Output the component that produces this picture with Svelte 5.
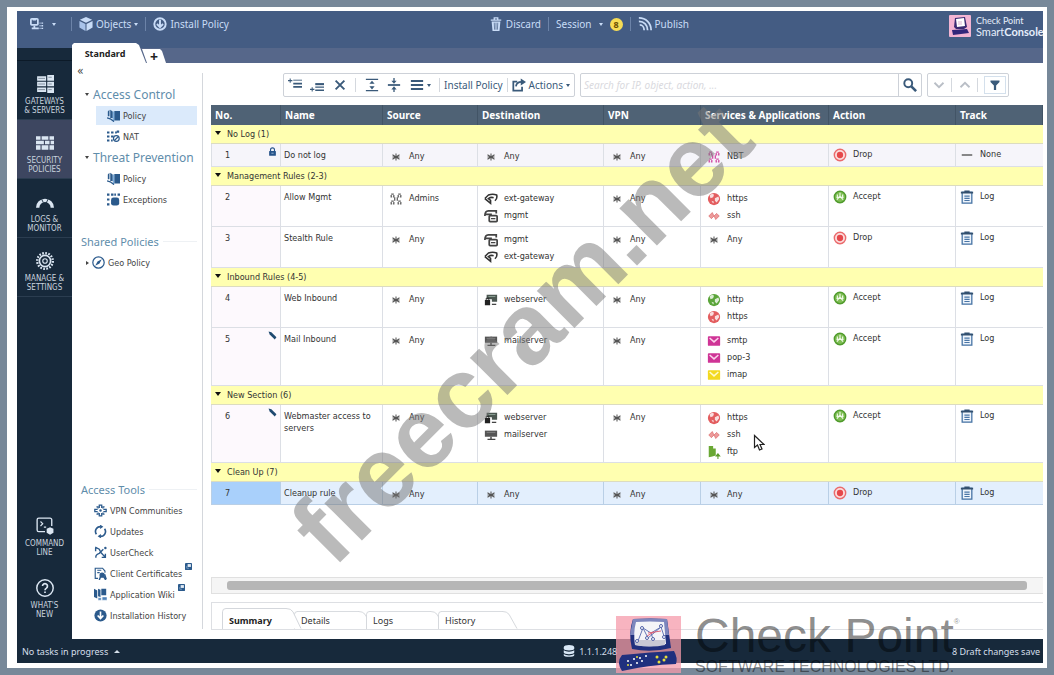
<script lang="ts">
	interface Item {
		icon: string;
		label: string;
	}

	interface Rule {
		no: number;
		name: string;
		source: Item[];
		destination: Item[];
		services: Item[];
		action: "Accept" | "Drop";
		track: "Log" | "None";
		mark?: "lock" | "pencil";
	}

	interface Section {
		title: string;
		rules: Rule[];
	}

	const any: Item = { icon: "any", label: "Any" };
	const gateway: Item = { icon: "gateway", label: "ext-gateway" };
	const mgmt: Item = { icon: "mgmt", label: "mgmt" };
	const webserver: Item = { icon: "webserver", label: "webserver" };
	const mailserver: Item = { icon: "mailserver", label: "mailserver" };
	const https: Item = { icon: "globe-red", label: "https" };
	const ssh: Item = { icon: "ssh", label: "ssh" };

	const sections: Section[] = [
		{
			title: "No Log (1)",
			rules: [
				{ no: 1, name: "Do not log", source: [any], destination: [any], services: [{ icon: "group-pink", label: "NBT" }], action: "Drop", track: "None", mark: "lock" },
			],
		},
		{
			title: "Management Rules (2-3)",
			rules: [
				{ no: 2, name: "Allow Mgmt", source: [{ icon: "group", label: "Admins" }], destination: [gateway, mgmt], services: [https, ssh], action: "Accept", track: "Log" },
				{ no: 3, name: "Stealth Rule", source: [any], destination: [mgmt, gateway], services: [any], action: "Drop", track: "Log" },
			],
		},
		{
			title: "Inbound Rules (4-5)",
			rules: [
				{ no: 4, name: "Web Inbound", source: [any], destination: [webserver], services: [{ icon: "globe-green", label: "http" }, https], action: "Accept", track: "Log" },
				{
					no: 5,
					name: "Mail Inbound",
					source: [any],
					destination: [mailserver],
					services: [{ icon: "mail-pink", label: "smtp" }, { icon: "mail-pink", label: "pop-3" }, { icon: "mail-yellow", label: "imap" }],
					action: "Accept",
					track: "Log",
					mark: "pencil",
				},
			],
		},
		{
			title: "New Section (6)",
			rules: [
				{ no: 6, name: "Webmaster access to servers", source: [any], destination: [webserver, mailserver], services: [https, ssh, { icon: "ftp", label: "ftp" }], action: "Accept", track: "Log", mark: "pencil" },
			],
		},
		{
			title: "Clean Up (7)",
			rules: [
				{ no: 7, name: "Cleanup rule", source: [any], destination: [any], services: [any], action: "Drop", track: "Log" },
			],
		},
	];

	const columns = ["No.", "Name", "Source", "Destination", "VPN", "Services & Applications", "Action", "Track"];

	const railTop = [
		{ icon: "servers", lines: ["GATEWAYS", "& SERVERS"] },
		{ icon: "wall", lines: ["SECURITY", "POLICIES"] },
		{ icon: "gauge", lines: ["LOGS &", "MONITOR"] },
		{ icon: "gear", lines: ["MANAGE &", "SETTINGS"] },
	];
	const railBottom = [
		{ icon: "terminal", lines: ["COMMAND", "LINE"] },
		{ icon: "help", lines: ["WHAT'S", "NEW"] },
	];

	const tools = [
		{ icon: "vpn", label: "VPN Communities" },
		{ icon: "updates", label: "Updates" },
		{ icon: "usercheck", label: "UserCheck" },
		{ icon: "cert", label: "Client Certificates", external: true },
		{ icon: "wiki", label: "Application Wiki", external: true },
		{ icon: "install", label: "Installation History" },
	];

	const detailTabs = ["Summary", "Details", "Logs", "History"];

	let activeView = $state("wall");
	let activeDetail = $state("Summary");
	let selectedRule = $state(7);
	let query = $state("");

	function rowLines(rule: Rule) {
		return Math.max(rule.source.length, rule.destination.length, rule.services.length);
	}
</script>

{#snippet icon(name: string)}
	<svg class="icon" viewBox="0 0 16 16" aria-hidden="true" fill="none" stroke="currentColor" stroke-width="1.5">
		{#if name === "menu"}
			<rect x="1" y="2" width="8" height="7" rx="1" stroke-width="2" />
			<path d="M3 3h4M2 13h8M5 10v3" stroke-width="2" />
			<path d="M11 7h1M13 7h2M11 10h1M13 10h2M11 13h1M13 13h2" />
		{:else if name === "cube"}
			<path d="M8 0l7 3-7 3.500L1 3z" fill="currentColor" stroke="none" />
			<path d="M0.500 4.500L7.400 8v8L0.500 12z" fill="#a9c3ea" stroke="none" />
			<path d="M15.500 4.500L8.600 8v8l6.900-4z" fill="currentColor" stroke="none" />
		{:else if name === "install"}
			<circle cx="8" cy="8" r="6.500" stroke-width="2.200" />
			<path d="M8 3v8M4.500 8L8 11.500 11.500 8" stroke-width="2.200" />
		{:else if name === "history"}
			<circle cx="8" cy="8" r="7.500" fill="currentColor" stroke="none" />
			<path d="M8 3v9M4.500 8L8 11.800 11.500 8" stroke="#fff" stroke-width="2" />
		{:else if name === "trash"}
			<path d="M2 3.500h12M6 3V1h4v2" />
			<path d="M3 5h10l-1 11H4z" fill="currentColor" stroke="none" />
			<path d="M6 6.500l.4 8M8 6.500v8M10 6.500l-.4 8" stroke="#445c83" stroke-width=".8" />
		{:else if name === "publish"}
			<path d="M1 1c8 0 14 6 14 14M1 5c6 0 10 4 10 10M2 9c3 0 5 3 5 6" stroke-width="2" />
		{:else if name === "servers"}
			<g fill="currentColor" stroke="none">
				<path d="M1 1h8v4H1zM1 6h8v4H1zM1 11h8v4H1zM10 0h6v5h-6zM10 6h6v4h-6zM10 11h6v5h-6z" />
			</g>
			<path d="M2 3h6M2 8h6M2 13h6M11 2h3M11 8h3M11 13h3" stroke="#7b8998" stroke-width=".8" />
		{:else if name === "wall"}
			<path d="M0 2h4v3H0zM5 2h6v3H5zM12 2h4v3h-4zM0 6h7v3H0zM8 6h4v3H8zM13 6h3v3h-3zM0 10h4v4H0zM5 10h6v4H5zM12 10h4v4h-4z" fill="currentColor" stroke="none" />
		{:else if name === "gauge"}
			<path d="M1.500 13A6.500 6.500 0 0 1 14.500 13" stroke-width="3" />
			<path d="M5 5.500l1.500 3M11 5l-2 4" stroke="#17293b" stroke-width=".8" />
		{:else if name === "gear"}
			<circle cx="8" cy="8" r="7" stroke-width="2" stroke-dasharray="1.500 1.250" />
			<circle cx="8" cy="8" r="5" />
			<circle cx="8" cy="8" r="2" stroke-width="1" />
		{:else if name === "terminal"}
			<path d="M8 13H2.500A1.500 1.500 0 0 1 1 11.500v-9A1.500 1.500 0 0 1 2.500 1h10A1.500 1.500 0 0 1 14 2.500V8" stroke-width="1.200" />
			<path d="M4 4l2 2-2 2M7 9h2" stroke-width="1" />
			<path d="M9.500 10.500l3-1.500 3 1.500v3.500l-3 1.700-3-1.700z" fill="currentColor" stroke="none" />
		{:else if name === "help"}
			<circle cx="8" cy="8" r="7.300" stroke-width="1.300" />
			<path d="M5.800 6.300a2.200 2.200 0 1 1 3.500 1.800Q8 8.900 8 10M8 11.200v1.300" />
		{:else if name === "policy"}
			<path d="M1 3l2-2v8H1zM4 1l3 2v8H4zM9 2.500h7V14H9z" fill="currentColor" stroke="none" />
			<path d="M0 11l4 1 4 3V4" stroke-width="1.600" />
			<path d="M8 3v11" stroke="#7fb0e0" stroke-width="1.500" />
		{:else if name === "nat"}
			<path d="M0 3h3M5 3h3M10 3h2M0 8h3M5 8h3M0 13h3M5 13h2M12 2h3" stroke-width="2.500" />
			<circle cx="11.500" cy="10.500" r="3.500" />
			<path d="M9 13l5-5" />
		{:else if name === "exceptions"}
			<path d="M0 2h3M5 2h3M9 2h2M13 2h3M0 8h3M0 14h3" stroke-width="2.500" />
			<rect x="5" y="5.500" width="10" height="10" rx="3" fill="currentColor" stroke="none" />
		{:else if name === "compass"}
			<circle cx="8" cy="8" r="7" />
			<path d="M12 4L9.200 9.200 4 12l2.800-5.200z" fill="currentColor" stroke="none" />
		{:else if name === "vpn"}
			<path d="M6.500 5V1.500h3V5M6.500 11v3.500h3V11M4.500 6.500H1v3h3.500M11.500 6.500H15v3h-3.500" stroke-width="1.600" />
			<path d="M3 3.500h2v2M13 3.500h-2v2M3 12.500h2v-2M13 12.500h-2v-2" stroke-width="1.600" />
			<circle cx="8" cy="8" r="1.500" fill="currentColor" stroke="none" />
		{:else if name === "updates"}
			<path d="M3 11.500A6 6 0 0 1 8 2M13 4.500A6 6 0 0 1 8 14" stroke-width="2" />
			<path d="M7.500-.5l4 2.700-4 2.800zM8.500 16.500l-4-2.700 4-2.800z" fill="currentColor" stroke="none" />
		{:else if name === "usercheck"}
			<path d="M1.500 1.500l5 2.500 2 4 5.500 6M2.500 14.500c-1-3 1-4.500 4-5.500l5-5M9.500 14h4.500V9.500M2 2v4.500" stroke-width="1.700" />
			<circle cx="14" cy="2.500" r="1.500" fill="currentColor" stroke="none" />
		{:else if name === "cert"}
			<path d="M5 14H1.500V1.500h9L13.500 5v2M4 4h5M4 7h3" stroke-width="1.400" />
			<circle cx="10" cy="10" r="2.500" fill="currentColor" />
			<path d="M8 12l-1.500 4M12 12l2.500 4M13 9l2 6" stroke-width="1.800" />
		{:else if name === "wiki"}
			<path d="M0 1l4 2v10l-4-2zM5 1l3 1v9l-3-1zM9 1h6v8H9z" fill="currentColor" stroke="none" />
			<path d="M5 12h4v3H5zM10 11h6v4h-6z" fill="#4f82b8" stroke="#fff" stroke-width=".6" />
		{:else if name === "external"}
			<rect x="0" y="0" width="16" height="16" rx="2" fill="currentColor" stroke="none" />
			<path d="M6 2.500h7.500V9H6z" fill="#dfe9f4" stroke="none" />
			<path d="M4 7v5h5" stroke="#7fa3c8" stroke-width="1.800" />
		{:else if name === "rule-above"}
			<path d="M0 3h5M2.500.5v5" stroke-width="1.200" />
			<path d="M6 2.500h10" stroke-width="1" />
			<path d="M6 6.500h10M6 10h10" stroke-width="2" />
		{:else if name === "rule-below"}
			<path d="M0 13h5M2.500 10.500v5" stroke-width="1.200" />
			<path d="M6 7h10" stroke-width="2.400" />
			<path d="M6 10.500h10M6 14h10" stroke-width="1.500" />
		{:else if name === "cross"}
			<path d="M3 3l10 10M13 3L3 13" stroke-width="2.200" />
		{:else if name === "expand"}
			<path d="M1 1.500h14M1 14.500h14M8 5v1M8 10v1" />
			<path d="M5 6.500l3-3.500 3 3.500zM5 9.500l3 3.500 3-3.500z" fill="currentColor" stroke="none" />
		{:else if name === "collapse"}
			<path d="M1 8h14" stroke-width="2" />
			<path d="M8 0v4M8 16v-4" />
			<path d="M5 3l3 3.500L11 3zM5 13l3-3.500 3 3.500z" fill="currentColor" stroke="none" />
		{:else if name === "list"}
			<path d="M1 3.500h14M1 8h14M1 12.500h14" stroke-width="2.400" />
		{:else if name === "share"}
			<path d="M6 4H1.500v10.500h10V10" stroke-width="2" />
			<path d="M4.500 9.500C5 6 7.500 4.500 11 4.500" stroke-width="2" />
			<path d="M10 .5L16 4.500 10 8.500z" fill="currentColor" stroke="none" />
		{:else if name === "search"}
			<circle cx="6" cy="6" r="4.500" stroke-width="2.200" />
			<path d="M9.500 9.500l5.500 5.500" stroke-width="3" />
		{:else if name === "down"}
			<path d="M2 5l6 6 6-6" stroke-width="2.400" />
		{:else if name === "up"}
			<path d="M2 11l6-6 6 6" stroke-width="2.400" />
		{:else if name === "filter"}
			<path d="M2 2h12v2L9.500 8.500v6h-3v-6L2 4z" fill="currentColor" stroke="none" />
		{:else if name === "any"}
			<path d="M8 4v8M4 5.500l8 5M12 5.500l-8 5M4 8h8" stroke="#555" stroke-width="1.200" />
		{:else if name === "group" || name === "group-pink"}
			<g stroke={name === "group" ? "#666" : "#d24fa6"} stroke-width="1.500">
				<path d="M2.500 2.500h3v3h-3zM10.500 2.500h3v3h-3zM2.500 10.500h3v3h-3zM10.500 10.500h3v3h-3z" stroke-dasharray="3 1" />
				<path d="M6.500 6v4M9.500 6v4" />
			</g>
		{:else if name === "gateway"}
			<path d="M1 7.500l4-4q5-2 9.500 0 1 4-2 6.500M1 7.500L7.500 13V9.500L5 7.500q3-2 6-1" stroke="#333" stroke-width="1.800" />
		{:else if name === "mgmt"}
			<path d="M1 8c0-4 1-6 4-6h9v3M2 6h7" stroke="#444" stroke-width="2" />
			<rect x="6" y="7.500" width="9" height="7" rx="1" stroke="#444" stroke-width="2" />
			<path d="M8 11h5" stroke="#444" />
		{:else if name === "webserver"}
			<path d="M3 2h12v8H9V7H3z" fill="#4a5650" stroke="none" />
			<path d="M5 4h8" stroke="#8fa398" stroke-width="1" />
			<rect x="1" y="8" width="6" height="6" fill="#222" stroke="none" />
			<path d="M9 13h5" stroke="#444" />
			<path d="M2.500 8V6h3v2" stroke="#222" stroke-width="1" />
		{:else if name === "mailserver"}
			<path d="M1 3h14v7H1z" fill="#555" stroke="none" />
			<path d="M3 5h10" stroke="#888" stroke-width="1" />
			<path d="M4 13h9M8 10v3" stroke="#444" stroke-width="1.600" />
		{:else if name === "globe-red" || name === "globe-green"}
			<circle cx="8" cy="8" r="7" fill={name === "globe-red" ? "#e35d5f" : "#5ba53a"} stroke="none" />
			<path d="M3 4c2-2 4-2 5-1L7 6 4 7zM9 7l4-2 1 3-3 4-2-2zM5 10l3 1-1 2z" fill="#fff" opacity=".8" stroke="none" />
		{:else if name === "ssh"}
			<path d="M2 8l4-4 2 4 3-3 3 3-4 4-2-4-3 3z" fill="#ec9a9a" stroke="#dc6a6c" stroke-width=".8" />
		{:else if name === "mail-pink" || name === "mail-yellow"}
			<rect x="1" y="2.500" width="14" height="11" rx="1" fill={name === "mail-pink" ? "#cf3496" : "#f3d920"} stroke="none" />
			<path d="M3 4.500l5 4.500 5-4.500" stroke={name === "mail-pink" ? "#fbd3ec" : "#fffbd0"} stroke-width="1.700" />
		{:else if name === "ftp"}
			<path d="M2 1h5v3h3v8l-4 1-4 1z" fill="#6aa834" stroke="none" />
			<path d="M12.500 16v-4M10.500 12.500L12.500 10l2 2.500z" fill="#5d9a2c" stroke="#5d9a2c" stroke-width="1.200" />
		{:else if name === "Drop"}
			<circle cx="8" cy="8" r="6.500" fill="#fbdcdc" stroke="#ea6a6c" stroke-width="1.600" />
			<circle cx="8" cy="8" r="3.600" fill="#e5484b" stroke="none" />
		{:else if name === "Accept"}
			<circle cx="8" cy="8" r="6.500" fill="#7fbe55" stroke="#4f9a2b" stroke-width="1.600" />
			<path d="M8 3v4L4.500 11M8 7l3.500 4M5 5v3M11 5v3M4 8.500h8" stroke="#f1f9ea" stroke-width="1.300" />
		{:else if name === "None"}
			<path d="M2 8h12" stroke="#777" stroke-width="2" />
		{:else if name === "Log"}
			<rect x="2.500" y="2.500" width="11" height="12.500" fill="#eef4fb" stroke="#4a76a6" />
			<path d="M1 3h14M5 1.500h6" stroke="#33506f" stroke-width="2" />
			<path d="M5 7h6M5 9.500h6M5 12h6" stroke="#4a76a6" stroke-width="1.300" />
		{:else if name === "lock"}
			<rect x="2" y="7" width="12" height="8.500" rx="1" fill="#27548a" stroke="none" />
			<path d="M4.500 7V5a3.500 3.500 0 0 1 7 0v2" stroke="#27548a" stroke-width="2" />
			<path d="M6 11h4" stroke="#a9c3e0" />
		{:else if name === "pencil"}
			<path d="M1 1l5 1 9 9-3 4-9-9z" fill="#1f4a70" stroke="none" />
		{:else if name === "database"}
			<path d="M1 3c0-4 14-4 14 0v2c0 3-14 3-14 0zM1 7c3 2.500 11 2.500 14 0v3c0 3-14 3-14 0zM1 12c3 2.500 11 2.500 14 0v1.500c0 3-14 3-14 0z" fill="#d9e8f7" stroke="none" />
		{/if}
	</svg>
{/snippet}

{#snippet objects(items: Item[])}
	<ul class="objects">
		{#each items as item}
			<li>{@render icon(item.icon)}<span>{item.label}</span></li>
		{/each}
	</ul>
{/snippet}

{#snippet railItem(item: { icon: string; lines: string[] })}
	<button type="button" class="rail-item" class:active={activeView === item.icon} onclick={() => (activeView = item.icon)}>
		{@render icon(item.icon)}
		<span>{item.lines[0]}<br />{item.lines[1]}</span>
	</button>
{/snippet}

<div class="frame">
	<div class="console">
		<header class="topbar">
			<div class="top-group">
				<button type="button" class="app-menu" aria-label="Application menu">{@render icon("menu")}<i class="caret"></i></button>
				<i class="sep"></i>
				<button type="button">{@render icon("cube")}Objects<i class="caret"></i></button>
				<i class="sep"></i>
				<button type="button">{@render icon("install")}Install Policy</button>
			</div>
			<div class="top-group">
				<button type="button">{@render icon("trash")}Discard</button>
				<i class="sep"></i>
				<button type="button" class="session">Session<i class="caret"></i><b class="badge">8</b></button>
				<i class="sep"></i>
				<button type="button">{@render icon("publish")}Publish</button>
			</div>
			<div class="brand">
				<svg viewBox="0 0 22 22" aria-hidden="true">
					<rect width="22" height="22" rx="1" fill="#f3b4d3" />
					<path d="M6 3l10-1 2 10-3 2H7l-2-2z" fill="#3a2a72" />
					<path d="M7 4l8-1 1 8-8 1z" fill="#fff" />
					<path d="M9 7h4M9 9h4" stroke="#d9b3cf" />
					<path d="M3 15l15-1 2 4-16 2z" fill="#33267a" />
				</svg>
				<div class="brand-name">
					<div>Check Point</div>
					<div class="product">Smart<b>Console</b></div>
				</div>
			</div>
		</header>

		<div class="body">
			<nav class="rail" aria-label="Views">
				<div class="rail-cap"></div>
				{#each railTop as item}
					{@render railItem(item)}
				{/each}
				<div class="rail-bottom">
					{#each railBottom as item}
						{@render railItem(item)}
					{/each}
				</div>
			</nav>

			<div class="page">
				<div class="tabstrip">
					<button type="button" class="tab">Standard</button>
					<button type="button" class="tab tab-add" aria-label="New tab">+</button>
				</div>

				<div class="workspace">
					<aside class="sidebar">
						<button type="button" class="fold" aria-label="Collapse panel">«</button>
						<h2><i class="caret"></i>Access Control</h2>
						<a class="sub selected" href="#policy">{@render icon("policy")}Policy</a>
						<a class="sub" href="#nat">{@render icon("nat")}NAT</a>
						<h2><i class="caret"></i>Threat Prevention</h2>
						<a class="sub" href="#threat">{@render icon("policy")}Policy</a>
						<a class="sub" href="#exceptions">{@render icon("exceptions")}Exceptions</a>
						<h2 class="group">Shared Policies</h2>
						<a class="leaf" href="#geo"><i class="caret side"></i>{@render icon("compass")}Geo Policy</a>
						<div class="tools">
							<h2 class="group">Access Tools</h2>
							{#each tools as tool}
								<a class="leaf" href="#tools">
									{@render icon(tool.label === "Installation History" ? "history" : tool.icon)}{tool.label}
									{#if tool.external}<span class="external">{@render icon("external")}</span>{/if}
								</a>
							{/each}
						</div>
					</aside>

					<main>
						<div class="toolbar">
							<div class="box actions">
								<button type="button" aria-label="Add rule above">{@render icon("rule-above")}</button>
								<button type="button" aria-label="Add rule below">{@render icon("rule-below")}</button>
								<button type="button" aria-label="Delete rule">{@render icon("cross")}</button>
								<i class="sep"></i>
								<button type="button" aria-label="Expand all">{@render icon("expand")}</button>
								<button type="button" aria-label="Collapse all">{@render icon("collapse")}</button>
								<button type="button" aria-label="Layout">{@render icon("list")}<i class="caret"></i></button>
								<span class="labelled">
									<i class="sep"></i>
									<button type="button">Install Policy</button>
									<i class="sep"></i>
									<button type="button">{@render icon("share")}Actions<i class="caret"></i></button>
								</span>
							</div>
							<div class="box search">
								<input type="search" aria-label="Search rules" placeholder="Search for IP, object, action, ..." bind:value={query} />
								<button type="button" aria-label="Search">{@render icon("search")}</button>
							</div>
							<div class="box stepper">
								<button type="button" class="muted" aria-label="Next match">{@render icon("down")}</button>
								<i class="sep"></i>
								<button type="button" class="muted" aria-label="Previous match">{@render icon("up")}</button>
								<i class="sep"></i>
								<button type="button" class="filter" aria-label="Filter">{@render icon("filter")}</button>
							</div>
						</div>

						<table>
							<colgroup>
								<col class="c-no" /><col class="c-name" /><col class="c-source" /><col class="c-dest" />
								<col class="c-vpn" /><col class="c-services" /><col class="c-action" /><col />
							</colgroup>
							<thead>
								<tr>
									{#each columns as column}
										<th scope="col">{column}</th>
									{/each}
								</tr>
							</thead>
							{#each sections as section}
								<tbody>
									<tr class="section">
										<th colspan="8" scope="rowgroup"><i class="caret"></i>{section.title}</th>
									</tr>
									{#each section.rules as rule}
										<tr
											class="rule lines-{rowLines(rule)}"
											class:locked={rule.mark === "lock"}
											class:chosen={selectedRule === rule.no}
											onclick={() => (selectedRule = rule.no)}
										>
											<td class="no"><div>{rule.no}{#if rule.mark}{@render icon(rule.mark)}{/if}</div></td>
											<td class="name">{rule.name}</td>
											<td>{@render objects(rule.source)}</td>
											<td>{@render objects(rule.destination)}</td>
											<td>{@render objects([any])}</td>
											<td>{@render objects(rule.services)}</td>
											<td class="verdict">{@render objects([{ icon: rule.action, label: rule.action }])}</td>
											<td class="verdict">{@render objects([{ icon: rule.track, label: rule.track }])}</td>
										</tr>
									{/each}
								</tbody>
							{/each}
						</table>

						<div class="scroll"><div class="thumb"></div></div>

						<div class="details" role="tablist">
							{#each detailTabs as tab}
								<button type="button" role="tab" aria-selected={activeDetail === tab} class:active={activeDetail === tab} onclick={() => (activeDetail = tab)}>
									<svg viewBox="0 0 80 22" preserveAspectRatio="none" aria-hidden="true">
										<path d="M.5 22V4Q.5 .5 4 .5H64Q69 .5 71 4L79 21.500" fill="#fff" stroke="#d2d5da" />
									</svg>
									<span>{tab}</span>
								</button>
							{/each}
						</div>
					</main>
				</div>
			</div>
		</div>

		<footer class="status">
			<button type="button">No tasks in progress<i class="caret rise"></i></button>
			<span class="server">{@render icon("database")}1.1.1.248</span>
			<span>8 Draft changes save</span>
		</footer>
	</div>

	<div class="watermark">freecram.net</div>

	<div class="stamp">
		<svg viewBox="0 0 65 57" aria-hidden="true">
			<rect width="65" height="57" fill="#f59bab" opacity=".75" />
			<path d="M17 3q18-1 34 0l4 29q-20 5-39 1-4-16 1-30z" fill="#20307e" />
			<path d="M17 3q18-1 34 0l2 16H14z" fill="#7d86bd" />
			<path d="M20 6q14-1 28 0l2 22q-14 4-31 1-2-12 1-23z" fill="#f4f4f8" />
			<path d="M19 24h30v5q-14 3-30 0z" fill="#c9c9d4" />
			<path d="M22 25l5-13 8 5 10-6 3 9M27 12l5 10 13-11M35 17l2 6" fill="none" stroke="#6676b5" />
			<path d="M32 17l13-2M31 20l7-4" stroke="#df6478" />
			<g fill="#fff" stroke="#5262a8">
				<circle cx="26" cy="12" r="1.500" /><circle cx="45" cy="10" r="1.500" /><circle cx="21" cy="25" r="1.500" />
				<circle cx="37" cy="23" r="1.500" /><circle cx="48" cy="21" r="1.500" /><circle cx="31" cy="22" r="1.500" />
			</g>
			<path d="M6 39q30-3 52-4 4 7 2 13-28 1-54 7-6-9 0-16z" fill="#20307e" />
			<g fill="#fff">
				<circle cx="12" cy="45" r="1" /><circle cx="18" cy="43" r="1" /><circle cx="24" cy="42" r="1" /><circle cx="15" cy="49" r="1" />
				<circle cx="21" cy="47" r="1" /><circle cx="26" cy="45" r="1" /><circle cx="30" cy="40" r="1" />
			</g>
			<g fill="#e6df3c">
				<circle cx="41" cy="41" r="1.500" /><circle cx="50" cy="41" r="1.500" /><circle cx="43" cy="46" r="1.500" />
				<circle cx="48" cy="44" r="1.500" /><circle cx="12" cy="49" r="1" /><circle cx="21" cy="41" r="1" />
			</g>
		</svg>
		<div>
			<div class="stamp-name">Check Point<sup>®</sup></div>
			<div class="stamp-line">SOFTWARE TECHNOLOGIES LTD.</div>
		</div>
	</div>

	<svg class="pointer" viewBox="0 0 12 18" aria-hidden="true">
		<path d="M1.500 1.500v12l3-2.500 2 5 2.500-1-2-4.500h4z" fill="#fff" stroke="#222" stroke-width="1.200" />
	</svg>
</div>

<style>
	:global(body) {
		margin: 0;
		background: #778899;
	}

	.frame {
		position: relative;
		box-sizing: border-box;
		height: 100vh;
		min-height: 640px;
		padding: 7px;
		overflow: hidden;
		background: #778899;
		font-family: "Noto Sans", "Open Sans", sans-serif;
		font-size: 10px;
		color: #333;
	}

	.console {
		display: flex;
		flex-direction: column;
		box-sizing: border-box;
		height: 100%;
		padding: 4px 4px 5px 10px;
		background: #fff;
	}

	button {
		display: flex;
		align-items: center;
		margin: 0;
		padding: 0;
		border: 0;
		background: none;
		color: inherit;
		font: inherit;
		cursor: pointer;
	}

	a {
		color: inherit;
		text-decoration: none;
	}

	.icon {
		display: block;
		flex: none;
		width: 14px;
		height: 14px;
	}

	.caret {
		flex: none;
		border: 3px solid transparent;
		border-top-color: currentColor;
		border-bottom: 0;
	}

	.caret.rise {
		border-top: 0;
		border-bottom: 3px solid currentColor;
	}

	.caret.side {
		border: 3px solid transparent;
		border-left-color: currentColor;
		border-right: 0;
	}

	.topbar {
		display: flex;
		justify-content: space-between;
		box-sizing: border-box;
		height: 37px;
		padding: 0 0 11px 13px;
		overflow: hidden;
		background: #445c83;
		color: #c9dcf7;
	}

	.top-group {
		display: flex;
		align-items: center;
		gap: 7px;
	}

	.top-group button {
		gap: 3px;
	}

	.top-group .app-menu {
		gap: 8px;
		margin-right: 8px;
	}

	.top-group .session {
		gap: 7px;
	}

	.top-group .caret {
		border-width: 3px 2px 0;
	}

	.sep {
		flex: none;
		width: 1px;
		height: 14px;
		background: #6c83a8;
	}

	.badge {
		width: 13px;
		height: 13px;
		border-radius: 50%;
		background: #f6dc55;
		color: #6b4e00;
		font-size: 9px;
		line-height: 13px;
		text-align: center;
	}

	.brand {
		display: flex;
		gap: 5px;
		width: 94px;
		padding-top: 4px;
		white-space: nowrap;
	}

	.brand svg {
		flex: none;
		width: 22px;
		height: 22px;
	}

	.brand-name {
		color: #e6eefb;
		font-family: Lato, sans-serif;
		font-size: 9px;
		line-height: 11px;
	}

	.product {
		font-size: 11px;
	}

	.body {
		display: flex;
		flex: 1;
		min-height: 0;
	}

	.rail {
		display: flex;
		flex: none;
		flex-direction: column;
		width: 55px;
		background: #17293b;
		color: #c9d3df;
	}

	.rail-cap {
		height: 12px;
		border-bottom: 1px solid #0c1a28;
	}

	.rail-item {
		flex-direction: column;
		gap: 4px;
		box-sizing: border-box;
		width: 100%;
		height: 59px;
		padding-top: 14px;
		border-bottom: 1px solid #2b3d50;
		font-family: "DejaVu Sans Condensed", "Noto Sans", sans-serif;
		font-size: 8px;
		line-height: 9px;
		text-align: center;
		white-space: nowrap;
	}

	.rail-item .icon {
		width: 18px;
		height: 18px;
		color: #dbe6f2;
	}

	.rail-item.active {
		background: #3d4660;
	}

	.rail-bottom {
		margin-top: auto;
		padding-bottom: 12px;
	}

	.rail-bottom .rail-item {
		height: 62px;
		border: 0;
	}

	.page {
		display: flex;
		flex: 1;
		flex-direction: column;
		min-width: 0;
	}

	.tabstrip {
		display: flex;
		align-items: flex-end;
		flex: none;
		height: 15px;
		background: #56678a;
	}

	.tab {
		justify-content: center;
		flex: none;
		width: 74px;
		height: 20px;
		padding-right: 8px;
		background: #fff;
		clip-path: polygon(0 2px, 2px 0, 64px 0, 67px 2px, 74px 100%, 0 100%);
		color: #222;
		font-size: 9px;
		font-weight: 700;
	}

	.tab-add {
		width: 24px;
		height: 14px;
		padding: 0;
		margin-left: -4px;
		clip-path: polygon(0 0, 18px 0, 20px 2px, 24px 100%, 5px 100%);
		font-size: 14px;
	}

	.workspace {
		display: flex;
		flex: 1;
		min-height: 0;
	}

	.sidebar {
		position: relative;
		display: flex;
		flex: none;
		flex-direction: column;
		box-sizing: border-box;
		width: 131px;
		padding: 0 6px 13px 9px;
		color: #444;
		font-family: "DejaVu Sans Condensed", "Noto Sans", sans-serif;
		font-size: 9px;
	}

	.sidebar::after {
		content: "";
		position: absolute;
		top: 10px;
		right: 0;
		bottom: 10px;
		border-right: 1px solid #d4d7dc;
	}

	.fold {
		height: 21px;
		padding-bottom: 6px;
		margin-left: -4px;
		font-size: 12px;
	}

	.sidebar h2 {
		display: flex;
		align-items: center;
		gap: 4px;
		height: 21px;
		margin: 0;
		padding-left: 4px;
		color: #5f8dab;
		font-family: "Noto Sans", sans-serif;
		font-size: 12px;
		font-weight: 400;
		white-space: nowrap;
	}

	.sidebar h2 .caret {
		border-width: 3px 2px 0;
		color: #444;
	}

	.sidebar h2.group {
		margin-top: 21px;
		padding-left: 0;
		font-size: 11px;
	}

	.sidebar h2.group::after {
		content: "";
		flex: 1;
		border-top: 1px solid #eef1f4;
	}

	.sub,
	.leaf {
		display: flex;
		align-items: center;
		gap: 3px;
		height: 21px;
		white-space: nowrap;
	}

	.sub {
		margin-left: 15px;
		padding-left: 11px;
	}

	.sub.selected {
		height: 19px;
		margin-top: 1px;
		margin-bottom: 1px;
		background: #dbeafb;
	}

	.leaf {
		padding-left: 13px;
	}

	.leaf .caret {
		margin-left: -8px;
		border-width: 2px 0 2px 3px;
	}

	.sidebar .icon {
		width: 13px;
		height: 13px;
		color: #2b5a8c;
	}

	.external {
		align-self: flex-start;
	}

	.sidebar .external .icon {
		width: 7px;
		height: 7px;
	}

	.tools {
		margin-top: auto;
	}

	main {
		display: flex;
		flex: 1;
		flex-direction: column;
		min-width: 0;
		padding: 10px 0 9px 8px;
	}

	.toolbar {
		display: flex;
		flex: none;
		gap: 5px;
		height: 24px;
		margin: 0 34px 8px 72px;
		color: #3a5a7a;
	}

	.box {
		display: flex;
		align-items: center;
		box-sizing: border-box;
		border: 1px solid #cdd1d8;
		border-radius: 2px;
	}

	.box .sep {
		background: #d4d8de;
	}

	.box .caret {
		border-width: 3px 2px 0;
	}

	.actions {
		justify-content: space-between;
		width: 292px;
		padding: 0 4px;
	}

	.actions button {
		gap: 3px;
	}

	.labelled {
		display: flex;
		align-items: center;
		gap: 4px;
	}

	.search {
		flex: 1;
		min-width: 0;
	}

	.search input {
		flex: 1;
		min-width: 0;
		padding: 0 3px;
		border: 0;
		outline: 0;
		background: none;
		font: inherit;
	}

	.search input::placeholder {
		color: #d9d9de;
		font-style: italic;
	}

	.search button {
		justify-content: center;
		width: 23px;
		height: 100%;
		border-left: 1px solid #cdd1d8;
	}

	.stepper {
		justify-content: space-between;
		width: 82px;
		padding: 0 2px 0 5px;
	}

	.stepper .muted {
		color: #b9bec6;
	}

	.stepper .filter {
		justify-content: center;
		width: 22px;
		height: 18px;
		border: 1px solid #d4e0ec;
	}

	.stepper .icon {
		width: 12px;
		height: 12px;
	}

	table {
		width: 100%;
		table-layout: fixed;
		border-spacing: 0;
	}

	tbody {
		font-family: "DejaVu Sans Condensed", "Noto Sans", sans-serif;
		font-size: 9px;
	}

	.c-no { width: 70px; }
	.c-name { width: 102px; }
	.c-source { width: 95px; }
	.c-dest { width: 126px; }
	.c-vpn { width: 97px; }
	.c-services { width: 128px; }
	.c-action { width: 127px; }

	thead th {
		box-sizing: border-box;
		height: 20px;
		padding: 0 0 0 4px;
		border-right: 1px solid #425466;
		background: #4f6275;
		color: #fff;
		font-weight: 700;
		text-align: left;
		white-space: nowrap;
	}

	.section th {
		box-sizing: border-box;
		height: 19px;
		padding: 0 0 0 4px;
		border-bottom: 1px solid #dcdcc0;
		background: #ffffb0;
		font-weight: 400;
		line-height: 17px;
		text-align: left;
	}

	.section .caret {
		display: inline-block;
		margin-right: 6px;
		border-width: 4px 3px 0;
		vertical-align: 2px;
		color: #111;
	}

	.rule td {
		box-sizing: border-box;
		height: 23px;
		padding: 4px 0 0 6px;
		border-right: 1px solid #dcdfe5;
		border-bottom: 1px solid #dcdfe5;
		vertical-align: top;
	}

	.rule td:first-child {
		border-left: 1px solid #dcdfe5;
		background: #fdf9fd;
	}

	.rule td:last-child {
		border-right: 0;
	}

	.rule.lines-2 td {
		height: 41px;
	}

	.rule.lines-3 td {
		height: 58px;
	}

	.rule.locked td {
		background: #f6f5fa;
	}

	.rule.chosen td {
		background: #e3effd;
		border-color: #b9cfe6;
	}

	.rule.chosen td:first-child {
		background: #a9d0fb;
	}

	.rule td.name {
		padding: 5px 4px 0 3px;
		line-height: 12px;
	}

	.rule td.no {
		padding: 3px 3px 0 13px;
	}

	.no div {
		display: flex;
		justify-content: space-between;
		line-height: 16px;
	}

	.no .icon {
		width: 9px;
		height: 9px;
	}

	.rule td.verdict {
		padding: 2px 0 0 4px;
	}

	.objects {
		margin: 0;
		padding: 0;
		list-style: none;
	}

	.objects li {
		display: flex;
		align-items: center;
		gap: 6px;
		height: 17px;
		line-height: 17px;
	}

	.scroll {
		flex: none;
		box-sizing: border-box;
		height: 17px;
		margin-top: auto;
		padding: 3px 16px 3px 15px;
		border: 1px solid #e0e0e0;
		border-right: 0;
		background: #f5f5f5;
	}

	.thumb {
		height: 9px;
		border-radius: 3px;
		background: #b6b6b6;
	}

	.details {
		display: flex;
		flex: none;
		box-sizing: border-box;
		height: 28px;
		margin-top: 8px;
		padding: 5px 0 0 10px;
		border: 1px solid #dddfe3;
		border-right: 0;
		font-size: 9px;
	}

	.details button {
		position: relative;
		width: 72px;
		padding: 3px 0 0 7px;
	}

	.details button.active {
		z-index: 1;
		font-weight: 700;
		color: #222;
	}

	/* the slanted outline runs under the next tab */
	.details svg {
		position: absolute;
		top: 3px;
		bottom: 0;
		left: 0;
		width: 80px;
		height: 18px;
	}

	.details .active svg {
		top: 0;
		height: 21px;
	}

	.details span {
		position: relative;
	}

	.status {
		display: grid;
		grid-template-columns: 53% 1fr 91px;
		align-items: center;
		flex: none;
		box-sizing: border-box;
		height: 24px;
		padding-left: 5px;
		background: #17293b;
		color: #d5dfea;
		font-size: 9px;
		white-space: nowrap;
	}

	.status button {
		gap: 6px;
	}

	.server {
		display: flex;
		align-items: center;
		gap: 4px;
	}

	.server .icon {
		width: 12px;
		height: 12px;
	}

	.watermark {
		position: absolute;
		top: 332px;
		left: 521px;
		color: #777;
		font: 700 100px/1 "Liberation Sans", Arial, sans-serif;
		opacity: .5;
		pointer-events: none;
		transform: translate(-50%, -50%) rotate(-45deg);
	}

	.stamp {
		position: absolute;
		top: 616px;
		left: 616px;
		display: flex;
		gap: 14px;
		color: rgba(0, 0, 0, .45);
		font-family: "Liberation Sans", Arial, sans-serif;
		pointer-events: none;
		white-space: nowrap;
	}

	.stamp svg {
		width: 65px;
		height: 57px;
	}

	.stamp-name {
		height: 43px;
		font-size: 48px;
		line-height: 40px;
	}

	.stamp-name sup {
		font-size: 8px;
		line-height: 8px;
		vertical-align: 28px;
	}

	.stamp-line {
		font-size: 16px;
		line-height: 16px;
	}

	.pointer {
		position: absolute;
		top: 434px;
		left: 753px;
		width: 12px;
		height: 18px;
	}
</style>
